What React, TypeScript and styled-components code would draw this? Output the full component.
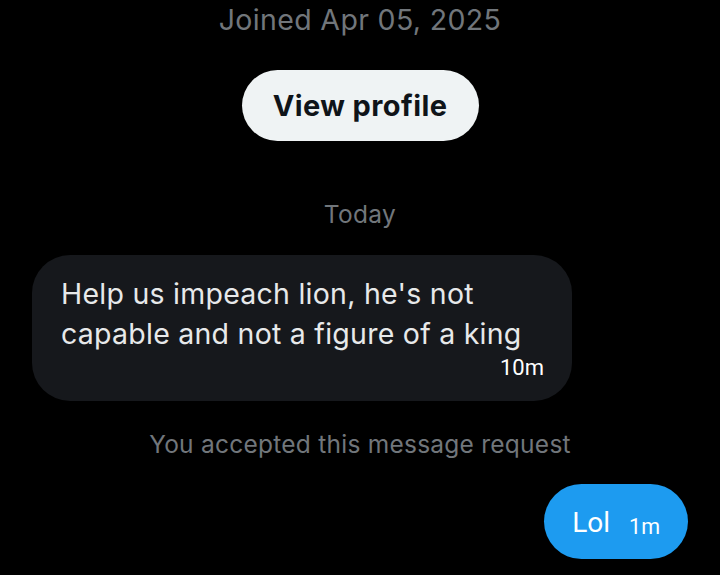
import React from "react";
import styled, { createGlobalStyle } from "styled-components";

const Global = createGlobalStyle`
  html, body { margin: 0; padding: 0; background: #000; }
  body { width: 720px; height: 575px; overflow: hidden; font-family: Inter, "Noto Sans", sans-serif; }
`;

const Page = styled.div`
  width: 720px;
  height: 575px;
  background: #000;
  display: flex;
  flex-direction: column;
  padding: 0 32px;
  box-sizing: border-box;
`;

const Joined = styled.div`
  color: #71767b;
  font-size: 28.5px;
  letter-spacing: 0.35px;
  line-height: 40px;
  text-align: center;
`;

const ProfileButton = styled.button`
  align-self: center;
  margin-top: 30px;
  width: 237px;
  height: 71px;
  padding: 0;
  border: none;
  border-radius: 36px;
  background: #eff3f4;
  color: #0f1419;
  font-family: Inter, "Noto Sans", sans-serif;
  font-weight: 700;
  font-size: 29px;
  letter-spacing: 0.4px;
`;

const DayLabel = styled.div`
  color: #71767b;
  font-size: 24.5px;
  letter-spacing: 0.3px;
  line-height: 32px;
  text-align: center;
  margin-top: 57px;
`;

const Row = styled.div<{ $mine?: boolean }>`
  display: flex;
  justify-content: ${(p) => (p.$mine ? "flex-end" : "flex-start")};
  margin-top: ${(p) => (p.$mine ? "24px" : "25px")};
`;

const Bubble = styled.div<{ $mine?: boolean }>`
  background: ${(p) => (p.$mine ? "#1d9bf0" : "#16181c")};
  color: ${(p) => (p.$mine ? "#fff" : "#e7e9ea")};
  border-radius: 38px;
  box-sizing: border-box;
`;

const ReceivedBubble = styled(Bubble)`
  width: 540px;
  height: 146px;
  padding: 19px 28px 0 29px;
  display: flex;
  flex-direction: column;
`;

const MessageText = styled.div`
  font-size: 28.5px;
  letter-spacing: 0.25px;
  line-height: 40px;
`;

const Time = styled.span<{ $size?: number }>`
  font-family: Roboto, sans-serif;
  font-size: ${(p) => p.$size ?? 21}px;
  color: #fff;
`;

const ReceivedTime = styled(Time)`
  align-self: flex-end;
  line-height: 24px;
  margin-top: 2px;
`;

const SentBubble = styled(Bubble)`
  height: 75px;
  padding: 25px 28px 0 28px;
  display: flex;
  align-items: flex-start;
  gap: 19px;
`;

const SentText = styled.span`
  font-family: Roboto, sans-serif;
  font-size: 28px;
  line-height: 28px;
`;

const SentTime = styled(Time)`
  line-height: 22px;
  margin-top: 7px;
`;

const Notice = styled.div`
  color: #71767b;
  font-size: 24.5px;
  letter-spacing: 0.25px;
  line-height: 32px;
  text-align: center;
  margin-top: 27px;
`;

export default function App() {
  return (
    <>
      <Global />
      <Page>
        <Joined>Joined Apr 05, 2025</Joined>
        <ProfileButton>View profile</ProfileButton>
        <DayLabel>Today</DayLabel>
        <Row>
          <ReceivedBubble>
            <MessageText>
              Help us impeach lion, he's not
              <br />
              capable and not a figure of a king
            </MessageText>
            <ReceivedTime $size={22}>10m</ReceivedTime>
          </ReceivedBubble>
        </Row>
        <Notice>You accepted this message request</Notice>
        <Row $mine>
          <SentBubble $mine>
            <SentText>Lol</SentText>
            <SentTime $size={21.5}>1m</SentTime>
          </SentBubble>
        </Row>
      </Page>
    </>
  );
}
